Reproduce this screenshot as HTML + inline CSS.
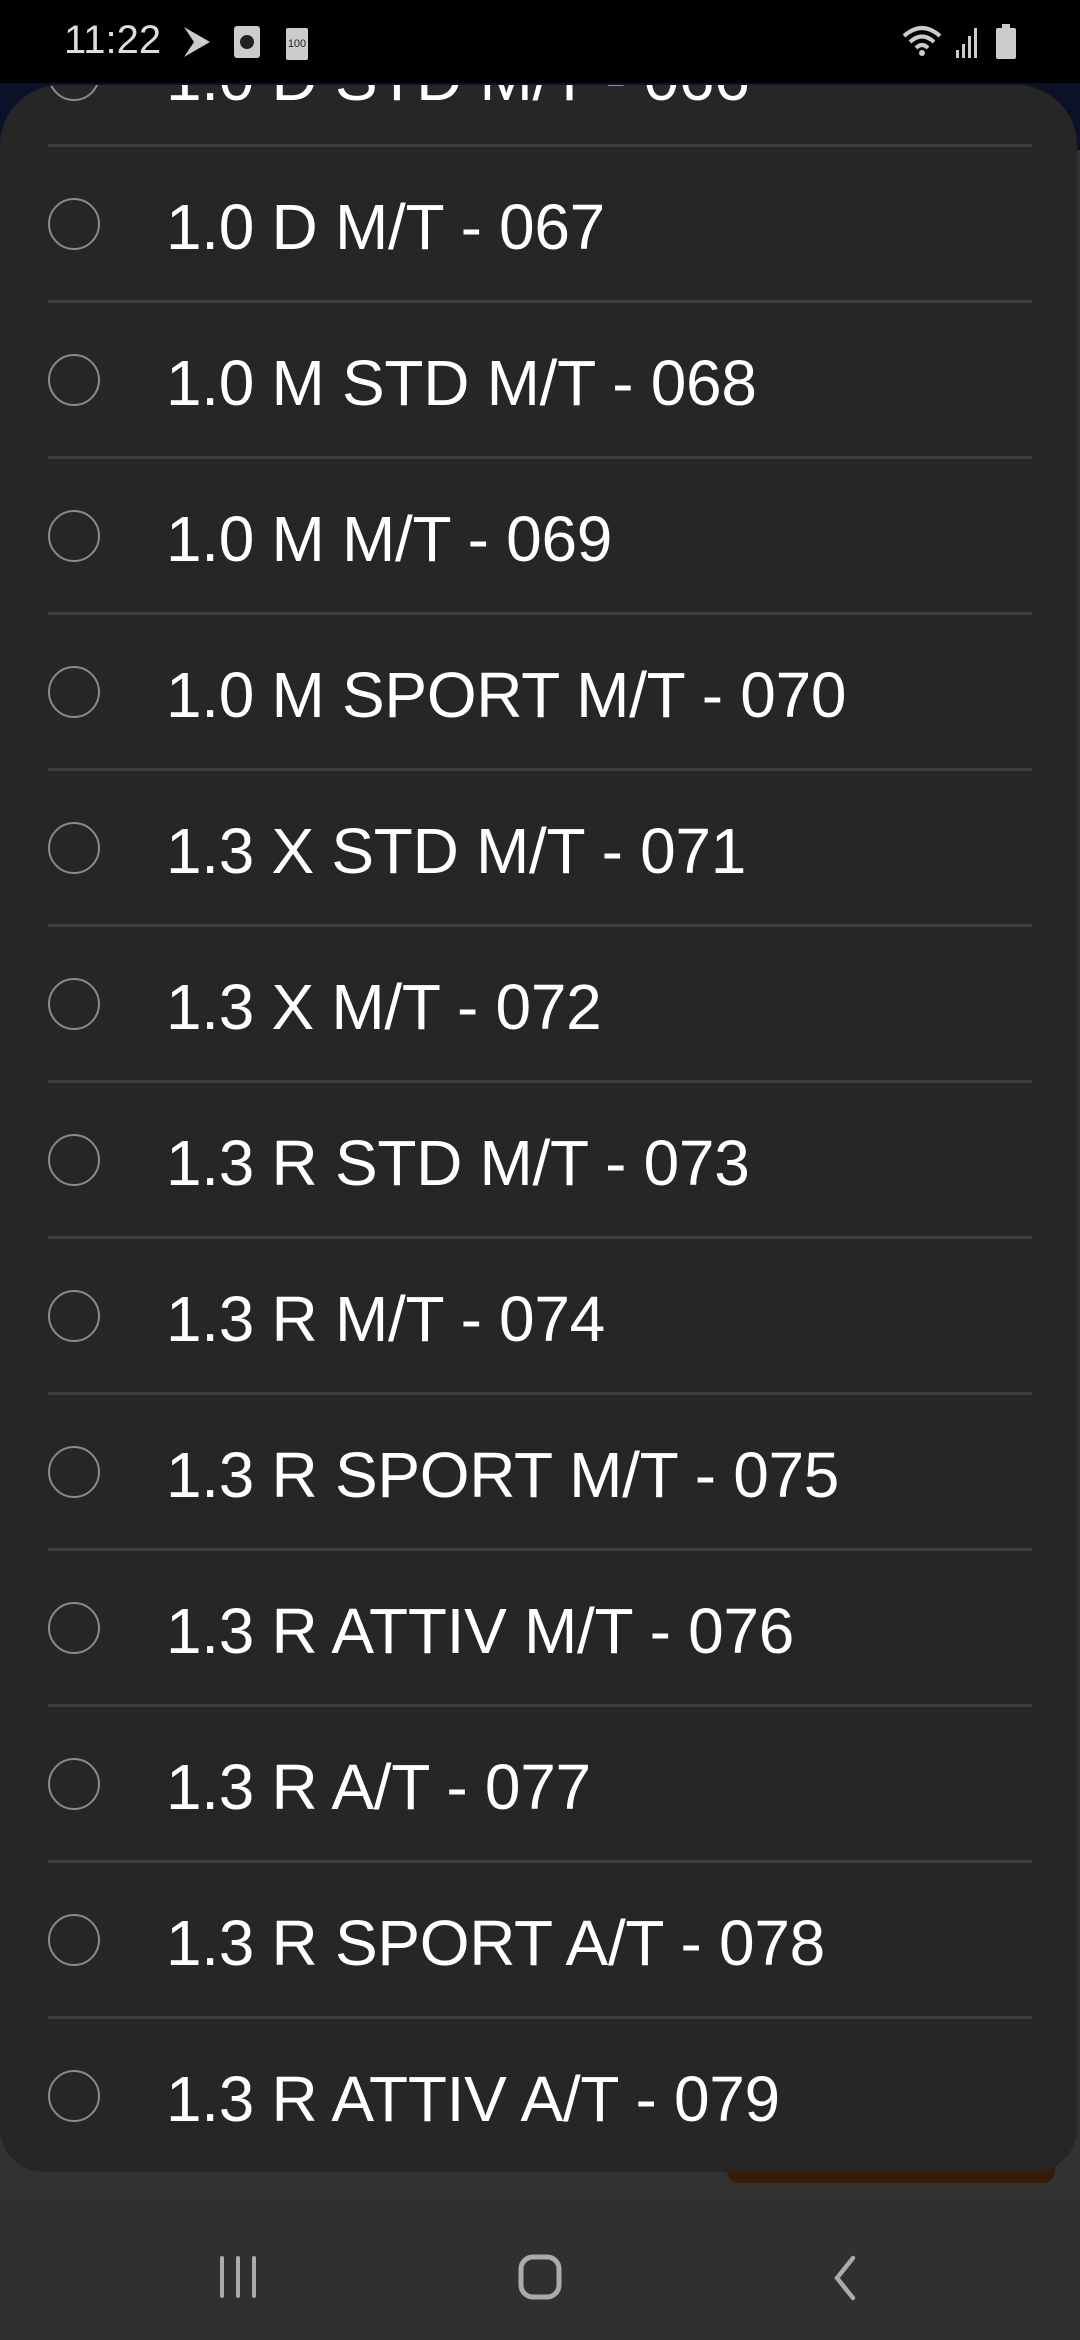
<!DOCTYPE html>
<html><head><style>
*{margin:0;padding:0;box-sizing:border-box}
body{width:1080px;height:2340px;background:#323232;position:relative;overflow:hidden;font-family:"Liberation Sans",Roboto,sans-serif}
.top{position:absolute;left:0;top:0;width:1080px;height:150px;background:#0b1128}
.sb{position:absolute;left:0;top:0;width:1080px;height:83px;background:#000;color:#ddd;z-index:3}
.sheet{position:absolute;left:0;top:85px;width:1077px;height:2087px;background:#262626;border-radius:60px 60px 44px 44px;overflow:hidden;z-index:2}
.row{position:absolute;left:0;width:1077px;height:156px}
.row .c{position:absolute;left:48px;top:53px;width:52px;height:52px;border:2px solid #8a8a8a;border-radius:50%}
.row .t{position:absolute;left:166px;top:4px;height:156px;line-height:156px;color:#fff;font-size:64px;white-space:nowrap;letter-spacing:-0.3px}
.div{position:absolute;left:48px;width:984px;height:3px;background:#3c3c3c}
.btn{position:absolute;left:727px;top:2120px;width:328px;height:63px;background:#361c06;border-radius:12px;z-index:1}
.nav{position:absolute;left:0;top:2200px;width:1080px;height:140px;background:#303030}
</style></head><body>
<div class="top"></div>
<div class="sb">
<div style="position:absolute;left:64px;top:18px;font-size:40px;color:#ddd">11:22</div>
<svg style="position:absolute;left:180px;top:24px" width="36" height="36" viewBox="0 0 36 36"><path d="M4 3 L30 18 L4 33 L14 18 Z" fill="#ccc"/></svg>
<div style="position:absolute;left:234px;top:26px;width:26px;height:32px;background:#ccc;border-radius:3px"><div style="position:absolute;left:6px;top:9px;width:14px;height:14px;border-radius:50%;background:#222"></div></div>
<div style="position:absolute;left:286px;top:28px;width:22px;height:32px;background:#ccc;border-radius:2px;font-size:11px;color:#222;text-align:center;line-height:32px">100</div>
<svg style="position:absolute;left:900px;top:22px" width="120" height="40" viewBox="0 0 120 40"><path d="M4 14 Q22 -2 40 14 M10 20 Q22 9 34 20 M16 26 Q22 20 28 26" stroke="#ccc" stroke-width="4" fill="none"/><circle cx="22" cy="31" r="3" fill="#ccc"/><rect x="56" y="28" width="3" height="8" fill="#ccc"/><rect x="62" y="22" width="3" height="14" fill="#ccc"/><rect x="68" y="14" width="3" height="22" fill="#ccc"/><rect x="74" y="6" width="3" height="30" fill="#ccc"/><rect x="96" y="6" width="20" height="31" rx="2" fill="#ccc"/><rect x="102" y="2" width="8" height="5" fill="#ccc"/></svg>
</div>
<div class="sheet">
<div class="row" style="top:-89px"><div class="c"></div><div class="t">1.0 D STD M/T - 066</div></div>
<div class="div" style="top:59px"></div>
<div class="row" style="top:60px"><div class="c"></div><div class="t">1.0 D M/T - 067</div></div>
<div class="div" style="top:215px"></div>
<div class="row" style="top:216px"><div class="c"></div><div class="t">1.0 M STD M/T - 068</div></div>
<div class="div" style="top:371px"></div>
<div class="row" style="top:372px"><div class="c"></div><div class="t">1.0 M M/T - 069</div></div>
<div class="div" style="top:527px"></div>
<div class="row" style="top:528px"><div class="c"></div><div class="t">1.0 M SPORT M/T - 070</div></div>
<div class="div" style="top:683px"></div>
<div class="row" style="top:684px"><div class="c"></div><div class="t">1.3 X STD M/T - 071</div></div>
<div class="div" style="top:839px"></div>
<div class="row" style="top:840px"><div class="c"></div><div class="t">1.3 X M/T - 072</div></div>
<div class="div" style="top:995px"></div>
<div class="row" style="top:996px"><div class="c"></div><div class="t">1.3 R STD M/T - 073</div></div>
<div class="div" style="top:1151px"></div>
<div class="row" style="top:1152px"><div class="c"></div><div class="t">1.3 R M/T - 074</div></div>
<div class="div" style="top:1307px"></div>
<div class="row" style="top:1308px"><div class="c"></div><div class="t">1.3 R SPORT M/T - 075</div></div>
<div class="div" style="top:1463px"></div>
<div class="row" style="top:1464px"><div class="c"></div><div class="t">1.3 R ATTIV M/T - 076</div></div>
<div class="div" style="top:1619px"></div>
<div class="row" style="top:1620px"><div class="c"></div><div class="t">1.3 R A/T - 077</div></div>
<div class="div" style="top:1775px"></div>
<div class="row" style="top:1776px"><div class="c"></div><div class="t">1.3 R SPORT A/T - 078</div></div>
<div class="div" style="top:1931px"></div>
<div class="row" style="top:1932px"><div class="c"></div><div class="t">1.3 R ATTIV A/T - 079</div></div>
</div>
<div class="btn"></div>
<div class="nav">
<svg style="position:absolute;left:214px;top:54px" width="50" height="46" viewBox="0 0 50 46"><path d="M8 4V42M24 4V42M40 4V42" stroke="#aaa" stroke-width="4" stroke-linecap="round"/></svg>
<svg style="position:absolute;left:515px;top:52px" width="50" height="50" viewBox="0 0 50 50"><rect x="6" y="5" width="38" height="40" rx="12" stroke="#aaa" stroke-width="5" fill="none"/></svg>
<svg style="position:absolute;left:825px;top:52px" width="40" height="50" viewBox="0 0 40 50"><path d="M28 6 L12 26 L28 46" stroke="#aaa" stroke-width="4.5" fill="none" stroke-linecap="round"/></svg>
</div>
</body></html>
